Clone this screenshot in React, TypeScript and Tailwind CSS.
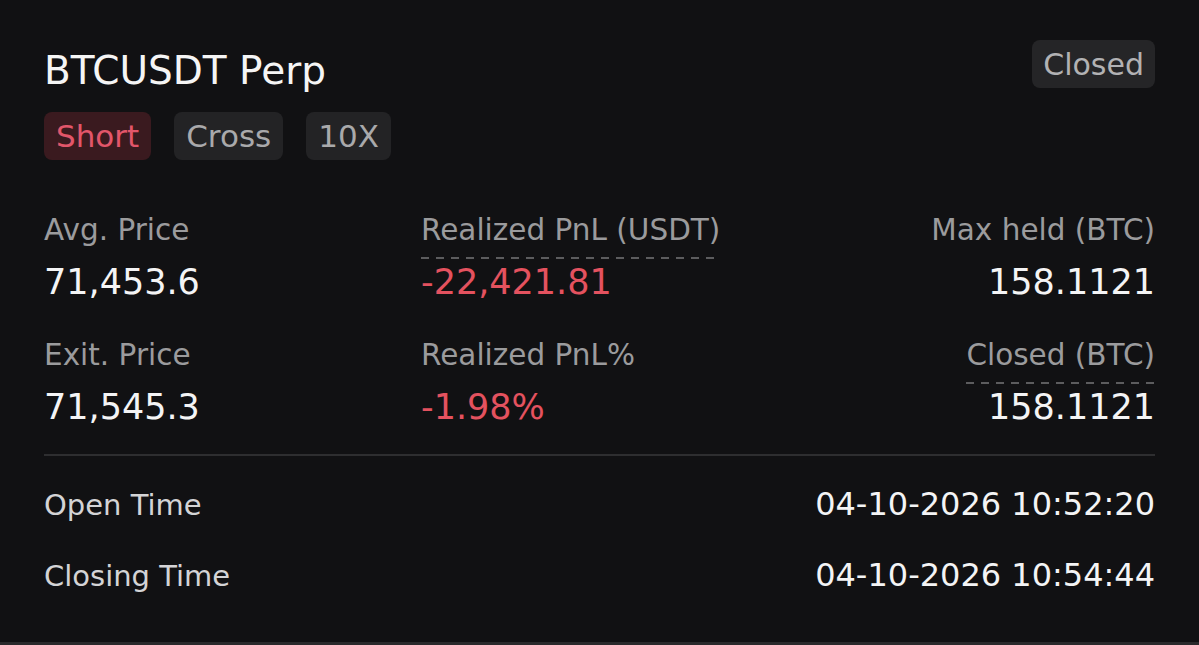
import React from 'react';

// Position summary card for a closed perpetual trade
type Stat = {
  label: string;
  value: string;
  dashed?: boolean;
  red?: boolean;
};

const rows: Stat[][] = [
  [
    { label: 'Avg. Price', value: '71,453.6' },
    { label: 'Realized PnL (USDT)', value: '-22,421.81', dashed: true, red: true },
    { label: 'Max held (BTC)', value: '158.1121' },
  ],
  [
    { label: 'Exit. Price', value: '71,545.3' },
    { label: 'Realized PnL%', value: '-1.98%', red: true },
    { label: 'Closed (BTC)', value: '158.1121', dashed: true },
  ],
];

const times = [
  { label: 'Open Time', value: '04-10-2026 10:52:20' },
  { label: 'Closing Time', value: '04-10-2026 10:54:44' },
];

const StatCell = ({ stat, align }: { stat: Stat; align: 'left' | 'right' }) => (
  <div className={`flex flex-col ${align === 'right' ? 'items-end' : 'items-start'}`}>
    <div className="flex flex-col">
      <span className="text-[29.5px] leading-[34px] text-[#9b9b9d]">{stat.label}</span>
      <div
        className={`mt-[10px] h-[2px] w-full ${
          stat.dashed
            ? 'bg-[repeating-linear-gradient(90deg,#5c5c5e_0_8px,transparent_8px_15px)]'
            : 'bg-transparent'
        }`}
      />
    </div>
    <span
      className={`mt-[3px] text-[35px] leading-[40px] ${
        stat.red ? 'text-[#e4525f]' : 'text-[#f4f4f5]'
      }`}
    >
      {stat.value}
    </span>
  </div>
);

export default function App() {
  return (
    <div className="h-[645px] w-full overflow-hidden bg-[#111113] border-b-[3px] border-[#2a2a2c] font-['DejaVu_Sans',sans-serif]">
      <div className="px-[44px] pt-[40px]">
        {/* Header */}
        <div className="flex items-start justify-between">
          <div className="flex flex-col">
            <h1 className="mt-[12px] text-[39px] leading-[38px] text-[#f5f5f5]">BTCUSDT Perp</h1>
            <div className="mt-[22px] flex gap-[23px]">
              <span className="flex h-[48px] items-center rounded-[8px] bg-[#3a1a1f] px-[12px] text-[31px] text-[#e2566a]">
                Short
              </span>
              <span className="flex h-[48px] items-center rounded-[8px] bg-[#232325] px-[12px] text-[31px] text-[#a9a9ab]">
                Cross
              </span>
              <span className="flex h-[48px] items-center rounded-[8px] bg-[#232325] px-[12px] text-[31px] text-[#a9a9ab]">
                10X
              </span>
            </div>
          </div>
          <span className="flex h-[48px] items-center rounded-[8px] bg-[#252527] px-[11px] text-[30px] text-[#b2b2b4]">
            Closed
          </span>
        </div>

        {/* Stats grid */}
        <div className="mt-[53px] flex flex-col gap-[36px]">
          {rows.map((row, i) => (
            <div key={i} className="grid grid-cols-[377px_1fr_auto]">
              <StatCell stat={row[0]} align="left" />
              <StatCell stat={row[1]} align="left" />
              <StatCell stat={row[2]} align="right" />
            </div>
          ))}
        </div>

        <div className="mt-[27px] h-[2px] bg-[#2e2e30]" />

        {/* Times */}
        <div className="mt-[31px] flex flex-col gap-[36px]">
          {times.map((t) => (
            <div key={t.label} className="flex items-baseline justify-between">
              <span className="text-[29px] leading-[34px] text-[#d4d4d6]">{t.label}</span>
              <span className="text-[32px] leading-[34px] text-[#f4f4f5]">{t.value}</span>
            </div>
          ))}
        </div>
      </div>
    </div>
  );
}
